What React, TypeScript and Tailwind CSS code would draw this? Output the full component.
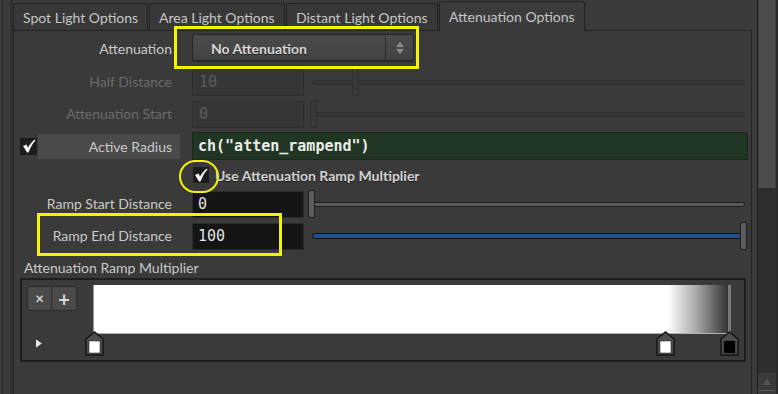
import React from 'react';

const Check = () => (
  <svg width="14" height="14" viewBox="0 0 14 14">
    <path d="M1 7 L4.5 5.5 L6 8.5 C8 5 10 2.5 13 0.5 L13.5 1.5 C10.5 4.5 8.5 8.5 6.5 13.5 L5 13.5 Z" fill="#f2f2f2" />
  </svg>
);

const Marker = ({ inner }: { inner: string }) => (
  <svg width="19" height="25" viewBox="0 0 19 25">
    <path d="M1 8 L9.5 1 L18 8 V24 H1 Z" fill="#4e4e4e" stroke="#151515" strokeWidth="1.5" />
    <rect x="4" y="10" width="11" height="12" fill={inner} stroke="#1a1a1a" strokeWidth="0.5" />
  </svg>
);

const Label = ({ children, disabled }: { children: React.ReactNode; disabled?: boolean }) => (
  <div className={`w-[158px] flex-none text-right text-[14px] leading-none ${disabled ? 'text-[#6b6b6b]' : 'text-[#c9c9c9]'}`}>
    {children}
  </div>
);

const Slider = ({ thumb, kind }: { thumb: number; kind: 'off' | 'gray' | 'blue' }) => {
  const groove =
    kind === 'blue'
      ? 'h-[6px] bg-[#1f4f8c] border border-[#121212]'
      : kind === 'gray'
      ? 'h-[5px] bg-[#5a5a5a] border border-[#1e1e1e]'
      : 'h-[5px] bg-[#353535] border border-[#2f2f2f]';
  const knob =
    kind === 'off'
      ? 'bg-[#383838] border border-[#2f2f2f]'
      : 'bg-[#5c5c5c] border border-[#1c1c1c]';
  return (
    <div className="relative ml-[4px] w-[440px] h-[28px] flex items-center">
      <div className={`ml-[4px] w-[433px] rounded-full ${groove}`} />
      <div className={`absolute top-0 w-[7px] h-[28px] rounded-[2px] ${knob}`} style={{ left: thumb }} />
    </div>
  );
};

const Tab = ({ children, width, active }: { children: React.ReactNode; width: string; active?: boolean }) => (
  <div
    className={`${width} flex-none flex items-center pl-[9px] text-[14px] text-[#c6c6c6] border border-[#222] rounded-t-[3px] border-b-0 ${
      active ? 'bg-[#3b3b3b] relative z-10 -mb-px h-[30px]' : 'h-[27px] bg-[#383838] border-b border-b-[#222]'
    }`}
  >
    {children}
  </div>
);

export default function App() {
  return (
    <div className="relative w-[778px] h-[394px] overflow-hidden bg-[#3a3a3a] flex font-['Lato',sans-serif]">
      {/* left edge lines */}
      <div className="w-[13px] flex-none flex">
        <div className="w-[2px]" />
        <div className="w-px bg-[#252525]" />
        <div className="w-[8px]" />
        <div className="w-px bg-[#252525]" />
        <div className="w-px" />
      </div>

      <div className="w-[739px] flex-none flex flex-col">
        {/* tabs */}
        <div className="h-[30px] flex items-end gap-px">
          <Tab width="w-[135px]">Spot Light Options</Tab>
          <Tab width="w-[136px]">Area Light Options</Tab>
          <Tab width="w-[152px]">Distant Light Options</Tab>
          <Tab width="w-[146px]" active>Attenuation Options</Tab>
        </div>

        {/* panel */}
        <div className="flex-1 border-t border-l border-r border-[#222] bg-[#3a3a3a] flex flex-col">
          {/* Attenuation */}
          <div className="mt-[3px] h-[27px] flex items-center pt-[2px]">
            <Label>Attenuation</Label>
            <div className="ml-[20px] -mt-[2px] w-[222px] h-[27px] flex rounded-[2px] border border-[#262626] bg-[linear-gradient(#4a4a4a,#424242)] shadow-[0_1px_0_#2a2a2a]">
              <div className="flex-1 flex items-center pl-[18px] pt-[2px] text-[14px] font-bold text-[#d6d6d6] [text-shadow:0_1px_0_#222]">
                No Attenuation
              </div>
              <div className="w-[28px] border-l border-[#2e2e2e] flex flex-col items-center justify-center gap-[2px]">
                <svg width="8" height="5" viewBox="0 0 8 5"><path d="M4 0 L8 5 H0 Z" fill="#8c8c8c" /></svg>
                <svg width="8" height="5" viewBox="0 0 8 5"><path d="M0 0 H8 L4 5 Z" fill="#8c8c8c" /></svg>
              </div>
            </div>
          </div>

          {/* Half Distance */}
          <div className="mt-[5px] h-[32px] flex items-center">
            <Label disabled>Half Distance</Label>
            <div className="ml-[20px] w-[112px] h-[27px] flex-none flex items-center pl-[6px] bg-[#363636] border border-[#2e2e2e] text-[15px] text-[#5c5c5c] font-['DejaVu_Sans_Mono',monospace]">
              10
            </div>
            <Slider thumb={44} kind="off" />
          </div>

          {/* Attenuation Start */}
          <div className="h-[32px] flex items-center">
            <Label disabled>Attenuation Start</Label>
            <div className="ml-[20px] w-[112px] h-[27px] flex-none flex items-center pl-[6px] bg-[#363636] border border-[#2e2e2e] text-[15px] text-[#5c5c5c] font-['DejaVu_Sans_Mono',monospace]">
              0
            </div>
            <Slider thumb={2} kind="off" />
          </div>

          {/* Active Radius */}
          <div className="h-[32px] flex items-center">
            <div className="ml-[6px] w-[17px] h-[17px] flex-none bg-[#1c1c1c] flex items-center justify-center">
              <Check />
            </div>
            <div className="ml-px w-[142px] h-[25px] flex-none bg-[#4a4a4a] flex items-center justify-end pr-[8px] text-[14px] text-[#c9c9c9]">
              Active Radius
            </div>
            <div className="ml-[12px] w-[556px] h-[28px] flex-none flex items-center pl-[5px] bg-[#213622] border border-[#1a281b] text-[15px] font-bold text-[#ececec] font-['DejaVu_Sans_Mono',monospace]">
              ch("atten_rampend")
            </div>
          </div>

          {/* Use Attenuation Ramp Multiplier */}
          <div className="h-[26px] flex items-center">
            <div className="ml-[179px] w-[16px] h-[16px] flex-none bg-[#1c1c1c] flex items-center justify-center">
              <Check />
            </div>
            <div className="ml-[6px] text-[14px] font-bold text-[#d2d2d2] [text-shadow:0_1px_0_#1e1e1e]">
              Use Attenuation Ramp Multiplier
            </div>
          </div>

          {/* Ramp Start Distance */}
          <div className="h-[32px] flex items-center">
            <Label>Ramp Start Distance</Label>
            <div className="ml-[20px] w-[112px] h-[27px] flex-none flex items-center pl-[5px] bg-[#141414] border border-[#2a2a2a] text-[15px] text-[#e2e2e2] font-['DejaVu_Sans_Mono',monospace]">
              0
            </div>
            <Slider thumb={0} kind="gray" />
          </div>

          {/* Ramp End Distance */}
          <div className="h-[32px] flex items-center">
            <Label>Ramp End Distance</Label>
            <div className="ml-[20px] w-[112px] h-[27px] flex-none flex items-center pl-[5px] bg-[#141414] border border-[#2a2a2a] text-[15px] text-[#e2e2e2] font-['DejaVu_Sans_Mono',monospace]">
              100
            </div>
            <Slider thumb={432} kind="blue" />
          </div>

          {/* Ramp */}
          <div className="mt-[9px] h-[15px] pl-[10px] text-[14px] leading-none text-[#c9c9c9]">Attenuation Ramp Multiplier</div>
          <div className="mt-[2px] ml-[6px] w-[726px] h-[84px] border-2 border-[#1e1e1e] flex">
            <div className="w-[71px] flex-none flex flex-col pl-[5px] pt-[6px]">
              <div className="flex">
                <div className="w-[25px] h-[25px] flex items-center justify-center bg-[#4a4a4a] border border-[#2a2a2a] rounded-l-[2px] text-[15px] font-bold text-[#d0d0d0]">×</div>
                <div className="w-[25px] h-[25px] flex items-center justify-center bg-[#4a4a4a] border border-l-0 border-[#2a2a2a] rounded-r-[2px] text-[20px] font-bold leading-none text-[#d8d8d8]">+</div>
              </div>
              <div className="mt-[27px] ml-[8px]">
                <svg width="8" height="11" viewBox="0 0 8 11"><path d="M0.5 0.5 L7.5 5.5 L0.5 10.5 Z" fill="#e8e8e8" stroke="#222" strokeWidth="0.8" /></svg>
              </div>
            </div>
            <div className="relative flex-1 pt-[5px]">
              <div className="w-[638px] h-[49px] border-l border-l-[#9a9a9a] border-b border-b-[#b0b0b0] border-r-[3px] border-r-[#7a7a7a] bg-[linear-gradient(to_right,#ffffff_0%,#ffffff_90.5%,#a8a8a8_95%,#333333_100%)]" />
              <div className="absolute top-[51px] left-[-8px]"><Marker inner="#ffffff" /></div>
              <div className="absolute top-[51px] left-[563px]"><Marker inner="#ffffff" /></div>
              <div className="absolute top-[51px] left-[627px]"><Marker inner="#000000" /></div>
            </div>
          </div>
        </div>
      </div>

      <div className="w-[5px] flex-none" />
      <div className="w-px flex-none bg-[#1e1e1e]" />
      {/* scrollbar */}
      <div className="w-[18px] flex-none flex flex-col">
        <div className="h-[188px] bg-[#4c4c4c] border-x border-[#404040]" />
        <div className="flex-1 bg-[#2e2e2e]" />
        <div className="h-[21px] bg-[#3a3a3a] flex flex-col items-center pt-[6px]">
          <svg width="8" height="6" viewBox="0 0 8 6"><path d="M4 0 L8 6 H0 Z" fill="#555" /></svg>
          <div className="mt-[5px] w-[16px] h-px bg-[#5a5a5a]" />
        </div>
      </div>
      <div className="w-[2px] flex-none bg-[#2a2a2a]" />

      {/* annotations */}
      <div className="absolute left-[174px] top-[26px] w-[245px] h-[43px] border-[3px] border-[#f4f400]" />
      <div className="absolute left-[37px] top-[213px] w-[245px] h-[43px] border-[3px] border-[#f4f400]" />
      <div className="absolute left-[179px] top-[160px] w-[40px] h-[33px] border-2 border-[#f4f400] rounded-full" />
    </div>
  );
}
